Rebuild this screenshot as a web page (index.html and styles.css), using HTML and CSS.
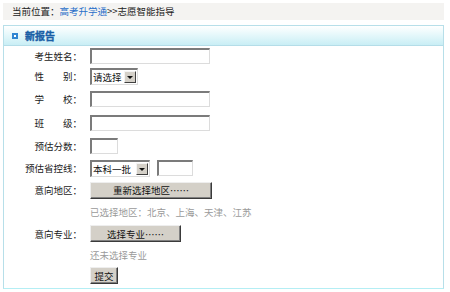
FILE: index.html
```html
<!DOCTYPE html>
<html lang="zh-CN">
<head>
    <title>志愿智能指导</title>
    <link rel="stylesheet" href="styles.css">
</head>
<body>
    <div class="page">
        <div class="crumb">当前位置：<a href="#">高考升学通</a>&gt;&gt;志愿智能指导</div>

        <div class="panel">
            <div class="panel-head"><span class="head-icon"></span>新报告</div>

            <form class="report-form" action="#" method="post">
                <div class="row first">
                    <label>考生姓名：</label>
                    <input type="text" class="txt w-long">
                </div>
                <div class="row">
                    <label>性　　别：</label>
                    <span class="sel-wrap w-sex"><select class="sel"><option>请选择</option><option>男</option><option>女</option></select></span>
                </div>
                <div class="row tall">
                    <label>学　　校：</label>
                    <input type="text" class="txt w-long">
                </div>
                <div class="row tall">
                    <label>班　　级：</label>
                    <input type="text" class="txt w-long">
                </div>
                <div class="row">
                    <label>预估分数：</label>
                    <input type="text" class="txt w-score">
                </div>
                <div class="row">
                    <label>预估省控线：</label>
                    <span class="sel-wrap w-batch"><select class="sel"><option>本科一批</option><option>本科二批</option><option>专科</option></select></span>
                    <input type="text" class="txt w-line">
                </div>
                <div class="row">
                    <label>意向地区：</label>
                    <button type="button" class="btn w-area">重新选择地区……</button>
                </div>
                <div class="row">
                    <span class="hint">已选择地区：北京、上海、天津、江苏</span>
                </div>
                <div class="row short">
                    <label>意向专业：</label>
                    <button type="button" class="btn w-major">选择专业……</button>
                </div>
                <div class="row short">
                    <span class="hint">还未选择专业</span>
                </div>
                <div class="row short">
                    <button type="submit" class="btn w-submit">提交</button>
                </div>
            </form>
        </div>
    </div>
</body>
</html>
```

FILE: styles.css
```css
body {
    margin: 0;
    font-family: "Noto Sans CJK SC", "DejaVu Sans", sans-serif;
    font-size: 9.5px;
    color: #222;
    background-color: white;
    text-spacing-trim: space-all;
}

.page {
    padding: 3px 6px 3px 3px;
}

.crumb {
    height: 17px;
    line-height: 17px;
    padding-left: 9px;
    background-color: #f4f3f1;
    color: #222;
}

.crumb a {
    color: #2a6fc9;
    text-decoration: none;
}

.panel {
    margin-top: 5px;
    border: 1px solid #b7dfe9;
    border-bottom-color: #b4eef4;
    height: 262px;
}

.panel-head {
    display: flex;
    align-items: center;
    height: 19px;
    padding-left: 8px;
    background: linear-gradient(#ffffff, #e6f8fb 45%, #c9eef5);
    border-bottom: 1px solid #b4dde8;
    color: #1a5ea6;
    font-size: 10px;
    font-weight: bold;
    -webkit-text-stroke: 0.4px #1a5ea6;
}

.head-icon {
    width: 2px;
    height: 2px;
    margin-right: 7px;
    border: 2px solid #2f86d2;
    background-color: white;
}

.row {
    display: flex;
    align-items: center;
    height: 22px;
    padding-left: 86px;
}

.row.first {
    height: 19px;
}

.row.tall {
    height: 24px;
}

.row.short {
    height: 21px;
}

.row label {
    width: 78px;
    margin-left: -86px;
    margin-right: 8px;
    text-align: right;
    white-space: nowrap;
    color: #1a1a1a;
}

.txt {
    height: 13px;
    padding: 0 2px;
    border-top: 2px solid #7b7b7b;
    border-left: 2px solid #7b7b7b;
    border-right: 1px solid #dcdcdc;
    border-bottom: 1px solid #dcdcdc;
    font: inherit;
    box-sizing: content-box;
}

.w-long {
    width: 113px;
}

.w-score {
    width: 21px;
}

.w-line {
    width: 29px;
    margin-left: 7px;
}

.sel-wrap {
    position: relative;
    display: inline-block;
    height: 17px;
    box-sizing: border-box;
    border-top: 2px solid #7b7b7b;
    border-left: 2px solid #7b7b7b;
    border-right: 1px solid #dcdcdc;
    border-bottom: 1px solid #dcdcdc;
    background-color: white;
}

.w-sex {
    width: 48px;
}

.w-batch {
    width: 60px;
}

.sel {
    appearance: none;
    -webkit-appearance: none;
    border: none;
    outline: none;
    background: transparent;
    font: inherit;
    color: #111;
    height: 14px;
    line-height: 14px;
    padding: 0 0 0 1px;
    width: 100%;
}

.sel-wrap::before {
    content: "";
    position: absolute;
    top: 1px;
    right: 1px;
    width: 10px;
    height: 10px;
    background-color: #d4d0c8;
    border: 1px solid #404040;
    border-top-color: #f4f4f4;
    border-left-color: #f4f4f4;
}

.sel-wrap::after {
    content: "";
    position: absolute;
    top: 6px;
    right: 4px;
    border-left: 3px solid transparent;
    border-right: 3px solid transparent;
    border-top: 3px solid #111;
}

.btn {
    height: 17px;
    padding: 0 6px;
    background-color: #d4d0c8;
    border: 1px solid #3a3a3a;
    border-top-color: #eeeeee;
    border-left-color: #eeeeee;
    box-shadow: inset -1px -1px 0 #808080;
    font: inherit;
    color: #111;
    line-height: 14px;
}

.w-area {
    width: 122px;
}

.w-major {
    width: 91px;
}

.w-submit {
    width: 28px;
    padding: 0;
}

.hint {
    color: #9a9a9a;
}
```
